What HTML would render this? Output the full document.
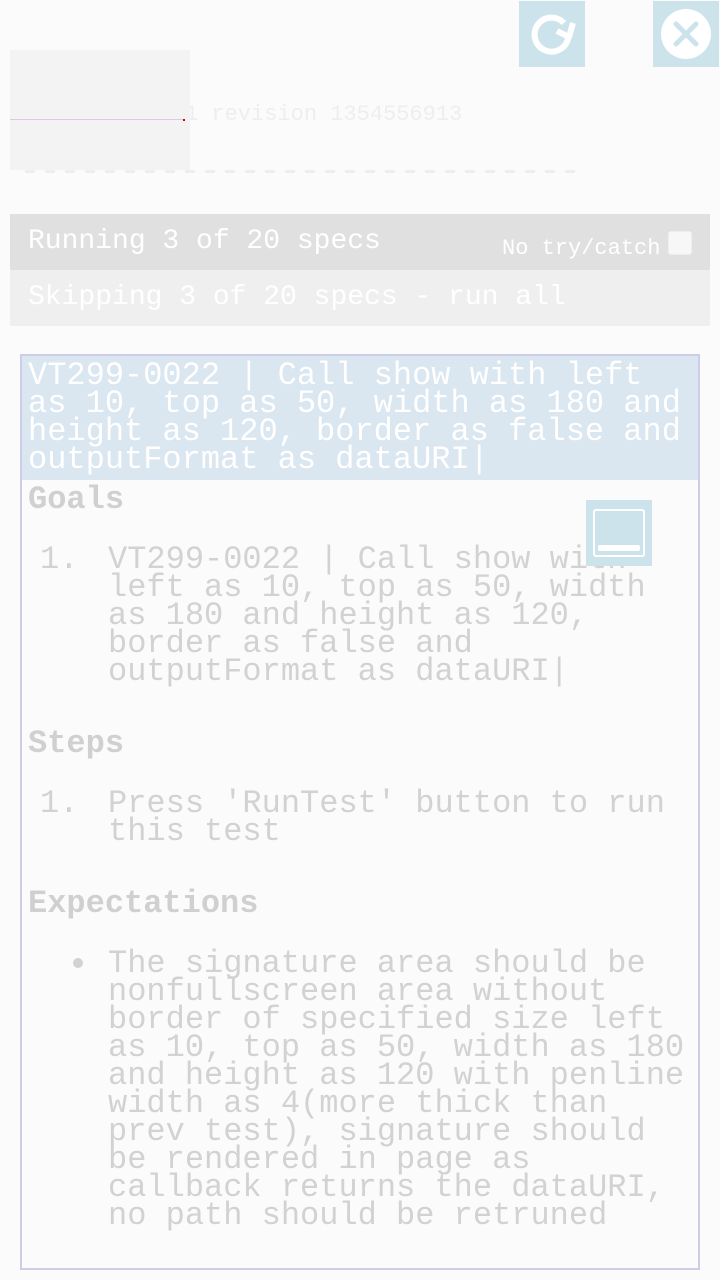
<!DOCTYPE html>
<html><head><meta charset="utf-8"><style>
*{margin:0;padding:0;box-sizing:border-box}
body{width:720px;height:1280px;background:#fbfbfb;position:relative;overflow:hidden;font-family:"Liberation Mono","DejaVu Sans Mono",monospace}
.a{position:absolute;white-space:pre}
.i{position:absolute}
svg{display:block}
.t{font-size:32px;line-height:28px;color:#d2d2d2}
.h{font-size:32px;line-height:28px;color:#d0d0d0;font-weight:bold}
.w{font-size:32px;line-height:28px;color:#fff}
</style></head><body>
<div class="i" style="left:519px;top:1px;width:66px;height:66px;background:#cde3ec"><svg width="66" height="66" viewBox="0 0 66 66"><path d="M45 22 A17 17 0 1 0 49 38" fill="none" stroke="#fff" stroke-width="6"/><path d="M38 30 L50 36 L54 22" fill="none" stroke="#fff" stroke-width="6" stroke-linejoin="round"/></svg></div>
<div class="i" style="left:653px;top:1px;width:66px;height:66px;background:#cde3ec"><svg width="66" height="66" viewBox="0 0 66 66"><circle cx="33" cy="33" r="25" fill="#fff"/><path d="M23 23 L43 43 M43 23 L23 43" stroke="#cde3ec" stroke-width="5" stroke-linecap="round"/></svg></div>
<div class="a" style="left:185px;top:102px;font-size:22px;line-height:26px;color:#eee">1 revision 1354556913</div>
<div class="i" style="left:25px;top:170px;width:552px;height:3px;background:repeating-linear-gradient(90deg,#eee 0 10px,transparent 10px 20px)"></div>
<div class="i" style="left:10px;top:50px;width:180px;height:120px;background:#f3f3f3"><div style="position:absolute;left:0;top:69px;width:174px;height:1px;background:#e4c6e2"></div><div style="position:absolute;left:173px;top:69px;width:2px;height:2px;background:#d00"></div></div>
<div class="i" style="left:10px;top:214px;width:700px;height:56px;background:#e0e0e0"></div>
<div class="i" style="left:10px;top:270px;width:700px;height:56px;background:#efefef"></div>
<div class="a" style="left:28px;top:227px;font-size:28px;line-height:30px;color:#fff">Running 3 of 20 specs</div>
<div class="a" style="left:502px;top:236px;font-size:22px;line-height:26px;color:#fff">No try/catch</div>
<div class="i" style="left:668px;top:231px;width:24px;height:24px;border:1px solid #eee;border-radius:3px;background:#f7f7f7"></div>
<div class="a" style="left:28px;top:283px;font-size:28px;line-height:30px;color:#fff">Skipping 3 of 20 specs - run all</div>
<div class="i" style="left:20px;top:354px;width:680px;height:916px;border:2px solid #cdcde8"></div>
<div class="i" style="left:22px;top:356px;width:676px;height:124px;background:#dae6f0"></div>
<div class="a w" style="left:28px;top:362px">VT299-0022 | Call show with left
as 10, top as 50, width as 180 and
height as 120, border as false and
outputFormat as dataURI|</div>
<div class="a h" style="left:28px;top:486px">Goals</div>
<div class="a t" style="left:40px;top:546px">1.</div>
<div class="a t" style="left:108px;top:546px">VT299-0022 | Call show with
left as 10, top as 50, width
as 180 and height as 120,
border as false and
outputFormat as dataURI|</div>
<div class="i" style="left:586px;top:500px;width:66px;height:66px;background:#cde3ec"><div style="position:absolute;left:7px;top:9px;width:52px;height:48px;border:2px solid #fff;border-radius:3px"></div><div style="position:absolute;left:12px;top:45px;width:42px;height:6px;background:#fff;border-radius:2px"></div></div>
<div class="a h" style="left:28px;top:730px">Steps</div>
<div class="a t" style="left:40px;top:790px">1.</div>
<div class="a t" style="left:108px;top:790px">Press 'RunTest' button to run
this test</div>
<div class="a h" style="left:28px;top:890px">Expectations</div>
<div class="i" style="left:73px;top:958px;width:10px;height:10px;border-radius:50%;background:#d2d2d2"></div>
<div class="a t" style="left:108px;top:950px">The signature area should be
nonfullscreen area without
border of specified size left
as 10, top as 50, width as 180
and height as 120 with penline
width as 4(more thick than
prev test), signature should
be rendered in page as
callback returns the dataURI,
no path should be retruned</div>
</body></html>
